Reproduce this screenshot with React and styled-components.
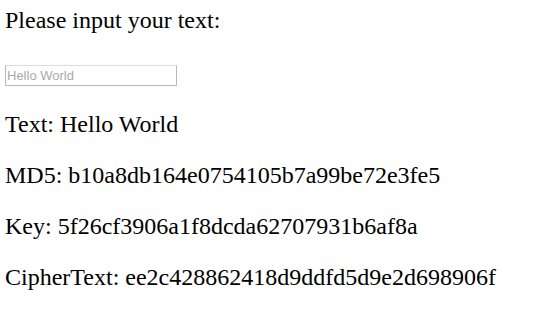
import React from 'react'
import styled, { createGlobalStyle } from 'styled-components'

const GlobalStyle = createGlobalStyle`
  body {
    margin: 0;
    background: #fff;
  }
`;

const Page = styled.div`
  padding: 7px 5px 0;
  font-family: "Liberation Serif", "Times New Roman", serif;
  font-size: 24px;
  color: #000;
`;

const Line = styled.p`
  margin: 0 0 ${(p) => p.gap ?? 24}px;
  line-height: 27px;
  white-space: nowrap;
`;

const TextInput = styled.input`
  display: block;
  box-sizing: border-box;
  width: 172px;
  height: 21px;
  margin: 31px 0 25px;
  padding: 0 1px;
  border: 1px solid #b9b9b9;
  border-top-color: #dcdcdc;
  font-family: "Liberation Sans", Arial, sans-serif;
  font-size: 13px;
  color: #000;
  outline: none;
  &::placeholder {
    color: #a9a9a9;
  }
`;

export default function App() {
  const [text, setText] = React.useState('')
  const rows = [
    ['Text', 'Hello World'],
    ['MD5', 'b10a8db164e0754105b7a99be72e3fe5'],
    ['Key', '5f26cf3906a1f8dcda62707931b6af8a'],
    ['CipherText', 'ee2c428862418d9ddfd5d9e2d698906f'],
  ]
  return (
    <>
      <GlobalStyle />
      <Page>
        <Line gap={0}>Please input your text:</Line>
        <TextInput
          type="text"
          placeholder="Hello World"
          value={text}
          onChange={(e) => setText(e.target.value)}
        />
        {rows.map(([label, value]) => (
          <Line key={label}>{label}: {value}</Line>
        ))}
      </Page>
    </>
  )
}
